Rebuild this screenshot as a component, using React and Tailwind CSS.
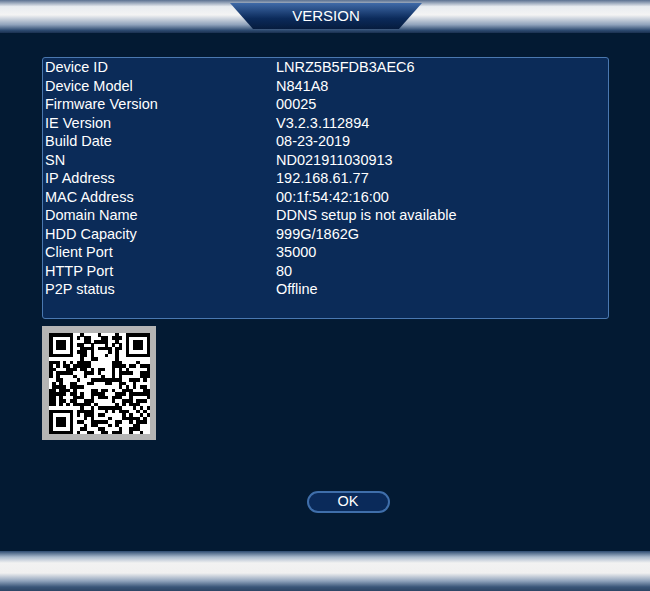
import React from "react";

const rows = [
  ["Device ID", "LNRZ5B5FDB3AEC6"],
  ["Device Model", "N841A8"],
  ["Firmware Version", "00025"],
  ["IE Version", "V3.2.3.112894"],
  ["Build Date", "08-23-2019"],
  ["SN", "ND021911030913"],
  ["IP Address", "192.168.61.77"],
  ["MAC Address", "00:1f:54:42:16:00"],
  ["Domain Name", "DDNS setup is not available"],
  ["HDD Capacity", "999G/1862G"],
  ["Client Port", "35000"],
  ["HTTP Port", "80"],
  ["P2P status", "Offline"],
];

function QR() {
  const N = 29;
  let s = 12345;
  const rnd = () => { s = (s * 1103515245 + 12345) & 0x7fffffff; return s / 0x7fffffff; };
  const cells = [];
  const finder = (r, c, fr, fc) => {
    const y = r - fr, x = c - fc;
    if (y < 0 || x < 0 || y > 6 || x > 6) return null;
    if (y === 0 || y === 6 || x === 0 || x === 6) return 1;
    if (y >= 2 && y <= 4 && x >= 2 && x <= 4) return 1;
    return 0;
  };
  for (let r = 0; r < N; r++) for (let c = 0; c < N; c++) {
    let v = finder(r, c, 0, 0);
    if (v === null) v = finder(r, c, 0, N - 7);
    if (v === null) v = finder(r, c, N - 7, 0);
    if (v === null) {
      if ((r === 7 && c < 8) || (c === 7 && r < 8) || (r === 7 && c > N - 9) || (c === N - 8 && r < 8) || (r === N - 8 && c < 8) || (c === 7 && r > N - 9)) v = 0;
      else v = rnd() < 0.5 ? 1 : 0;
    }
    if (v) cells.push(<rect key={r * N + c} x={c} y={r} width="1.02" height="1.02" fill="#000" />);
  }
  return (
    <svg viewBox={`0 0 ${N} ${N}`} width="101" height="101" shapeRendering="crispEdges">
      <rect width={N} height={N} fill="#fff" />
      {cells}
    </svg>
  );
}

export default function App() {
  return (
    <div className="w-[650px] h-[591px] bg-[#031a33] flex flex-col overflow-hidden" style={{ fontFamily: '"Liberation Sans", Arial, sans-serif' }}>
      <div className="h-[33px] relative bg-[linear-gradient(#5a7090_0%,#e8ecf0_20%,#f4f4f4_45%,#8fa2bb_75%,#2d4a70_92%,#1a3050_100%)]">
        <div className="absolute left-[230px] top-[3px] w-[192px] h-[26px] bg-[linear-gradient(#3f6aa8,#0b2a5a_60%,#061c3e)] [clip-path:polygon(0_0,100%_0,88%_100%,12%_100%)] flex items-center justify-center text-white text-[15px]">
          VERSION
        </div>
      </div>
      <div className="flex-1 flex flex-col px-[42px] pt-[24px]">
        <div className="w-[567px] h-[262px] border border-[#4a78b0] rounded-[3px] bg-[#0b2b58] pl-[2px]">
          {rows.map(([k, v]) => (
            <div key={k} className="flex h-[18.5px] items-center text-white text-[14.5px] leading-none">
              <div className="w-[231px]">{k}</div>
              <div>{v}</div>
            </div>
          ))}
        </div>
        <div className="mt-[7px] w-[114px] h-[114px] bg-[#b4b4b4] flex items-center justify-center">
          <QR />
        </div>
        <div className="flex justify-center mt-[51px] pl-[46px]">
          <div className="w-[83px] h-[22px] rounded-full border-2 border-[#3f6eaa] bg-[#0a2a5a] text-white text-[14.5px] flex items-center justify-center">OK</div>
        </div>
      </div>
      <div className="h-[40px] bg-[linear-gradient(#2d4a70_0%,#a8b8cc_15%,#f2f2f2_30%,#f0f0f0_55%,#8fa2bb_75%,#3a5578_90%,#2d4565_100%)]" />
    </div>
  );
}
